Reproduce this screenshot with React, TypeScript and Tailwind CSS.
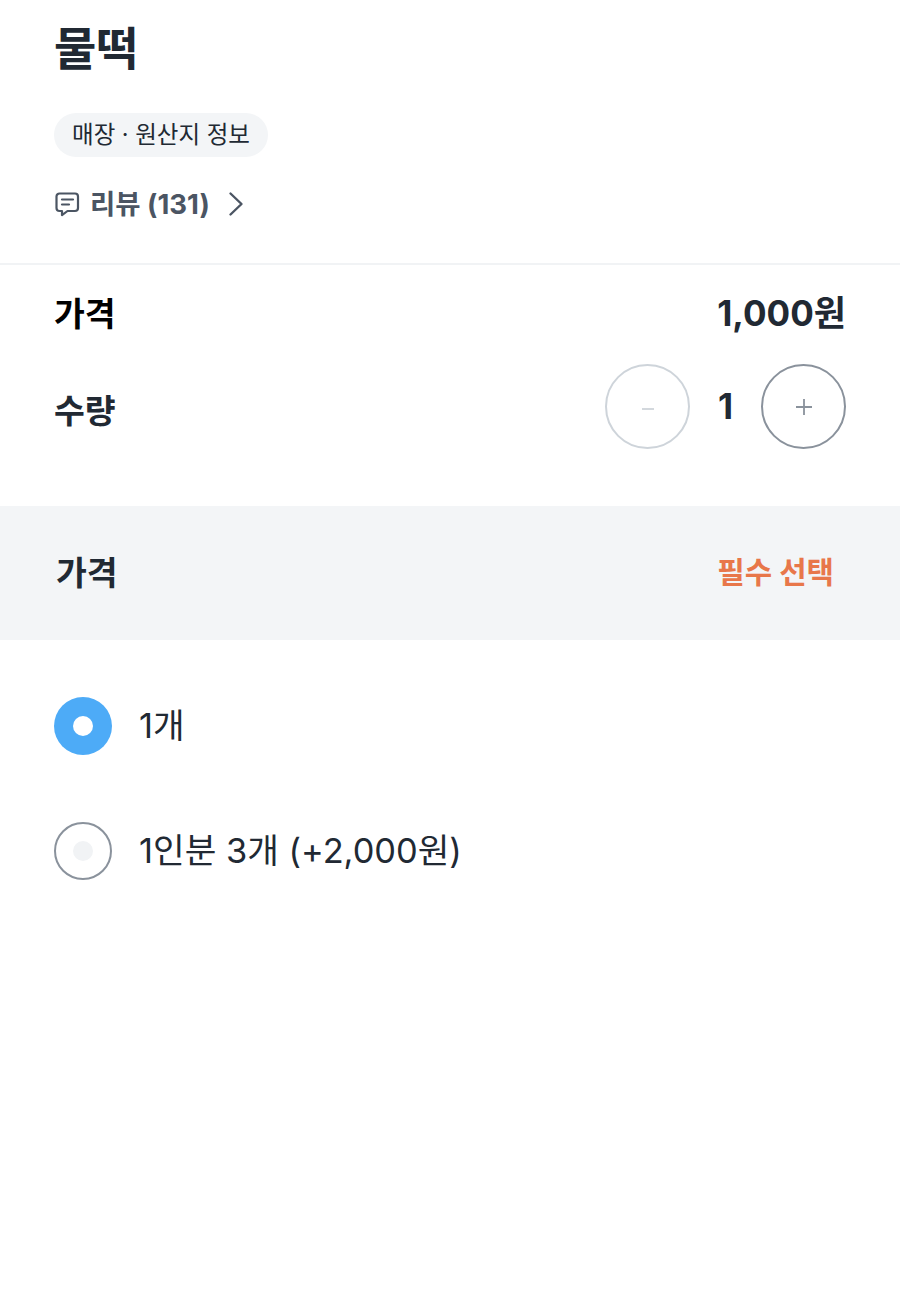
import React from "react";

function ReviewIcon() {
  return (
    <svg width="26" height="26" viewBox="0 0 26 26" fill="none" stroke="#4b5563" strokeWidth="2.2" strokeLinecap="round" strokeLinejoin="round">
      <path d="M5.500 2.500H21a3 3 0 0 1 3 3V17a3 3 0 0 1-3 3H13.500L8 24.200V20H5.500a3 3 0 0 1-3-3V5.500a3 3 0 0 1 3-3Z" />
      <path d="M8 8.500H19" />
      <path d="M8 13.500H15" />
    </svg>
  );
}

function Chevron() {
  return (
    <svg width="16" height="26" viewBox="0 0 16 26" fill="none" stroke="#4b5563" strokeWidth="2.4" strokeLinecap="round" strokeLinejoin="round">
      <path d="M2.500 2.500L13.500 13L2.500 23.500" />
    </svg>
  );
}

function Minus() {
  return (
    <svg width="14" height="4" viewBox="0 0 14 4" className="mt-[4px]" fill="none" stroke="#ced4da" strokeWidth="1.8">
      <path d="M1 2H13" />
    </svg>
  );
}

function Plus() {
  return (
    <svg width="18" height="18" viewBox="0 0 18 18" fill="none" stroke="#8a929c" strokeWidth="1.8">
      <path d="M1 9H17M9 1V17" />
    </svg>
  );
}

export default function App() {
  return (
    <div className="h-[1296px] w-[900px] overflow-hidden bg-white font-['Inter','Noto_Sans_CJK_KR',sans-serif] text-[#212933]">
      <section className="h-[263px] px-[54px] pt-[17px]">
        <h1 className="h-[62px] text-[46px] leading-[62px] font-bold">물떡</h1>
        <div className="mt-[34px] flex h-[44px] w-[214px] items-center justify-center rounded-full bg-[#f3f5f7] text-[23.500px] leading-none">
          매장 · 원산지 정보
        </div>
        <div className="mt-[30px] flex h-[34px] items-center text-[#4b5563]">
          <ReviewIcon />
          <span className="mt-[2px] ml-[10px] text-[27.500px] leading-none font-bold">리뷰 (131)</span>
          <span className="ml-[18px] flex"><Chevron /></span>
        </div>
      </section>
      <div className="h-[2px] bg-[#f1f3f5]" />

      <section className="h-[241px] px-[54px]">
        <div className="flex h-[96px] items-center justify-between">
          <span className="mt-[3px] text-[33.500px] leading-none font-bold text-black">가격</span>
          <span className="text-[35px] leading-none font-bold">1,000원</span>
        </div>
        <div className="mt-[3px] flex items-center justify-between">
          <span className="mt-[10px] text-[33.500px] leading-none font-bold">수량</span>
          <div className="flex items-center">
            <button className="flex h-[85px] w-[85px] items-center justify-center rounded-full border-[2.500px] border-[#ced4da]"><Minus /></button>
            <span className="w-[71px] text-center text-[35px] leading-none font-bold">1</span>
            <button className="flex h-[85px] w-[85px] items-center justify-center rounded-full border-[2.500px] border-[#8a929c]"><Plus /></button>
          </div>
        </div>
      </section>

      <section className="flex h-[134px] items-center justify-between bg-[#f3f5f7] pr-[66px] pl-[56px]">
        <span className="mt-[2px] text-[33.500px] leading-none font-bold">가격</span>
        <span className="text-[29.800px] leading-none font-bold text-[#e8774a]">필수 선택</span>
      </section>

      <section className="px-[54px] pt-[57px]">
        <div className="flex h-[58px] items-center gap-[27px]">
          <span className="flex h-[58px] w-[58px] items-center justify-center rounded-full bg-[#4dabf7]">
            <span className="h-[20px] w-[20px] rounded-full bg-white" />
          </span>
          <span className="text-[34.400px] leading-none">1개</span>
        </div>
        <div className="mt-[67px] flex h-[58px] items-center gap-[27px]">
          <span className="flex h-[58px] w-[58px] items-center justify-center rounded-full border-[2.500px] border-[#8a929c]">
            <span className="h-[20px] w-[20px] rounded-full bg-[#f1f3f5]" />
          </span>
          <span className="text-[34.400px] leading-none">1인분 3개 (+2,000원)</span>
        </div>
      </section>
    </div>
  );
}
